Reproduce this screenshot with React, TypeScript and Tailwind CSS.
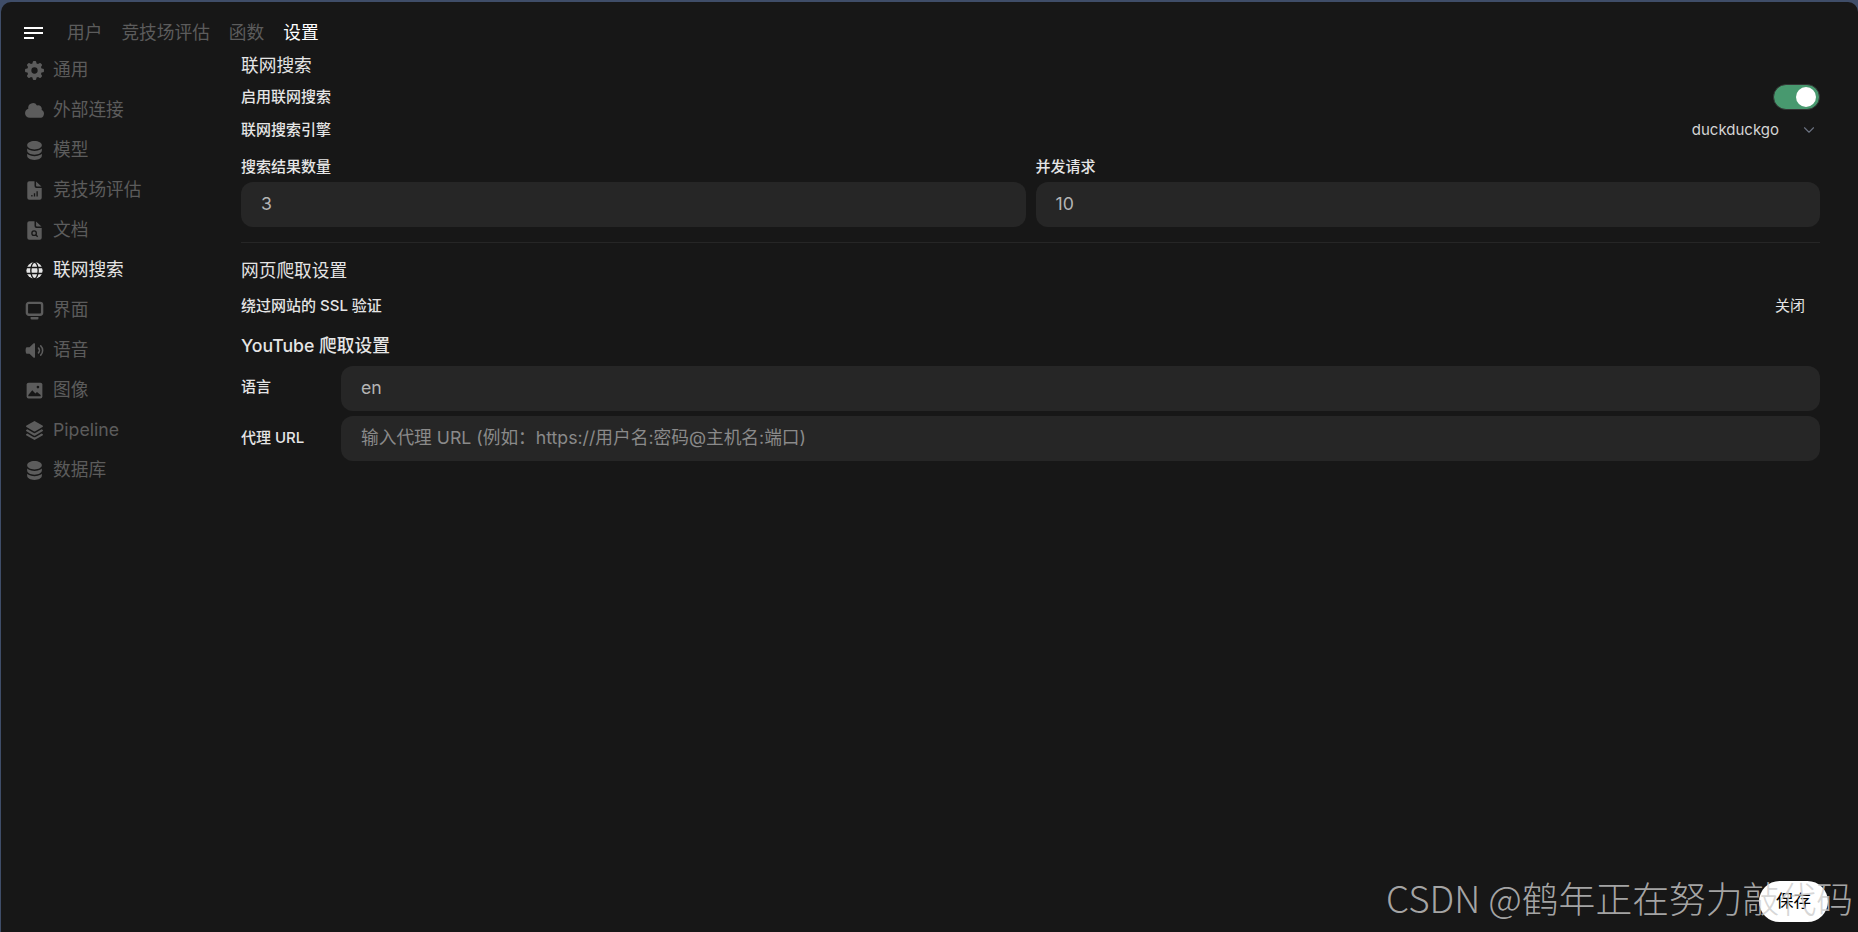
import React from 'react';
import {
  HiMiniCog8Tooth,
  HiMiniCloud,
  HiMiniCircleStack,
  HiMiniSpeakerWave,
  HiMiniSquare3Stack3D,
} from 'react-icons/hi2';
import { ChevronDown } from 'lucide-react';

const fontStack = { fontFamily: '"Inter", "Noto Sans CJK SC", sans-serif' };

type IconProps = { className?: string };

const DocBody = () => (
  <>
    <path d="M2.5 2.5A1.5 1.5 0 0 1 4 1h4v3.5A1.5 1.5 0 0 0 9.5 6h4v7.5A1.5 1.5 0 0 1 12 15H4a1.5 1.5 0 0 1-1.5-1.5Z" fill="currentColor" />
    <path d="M9.2 1.2 13.3 4.9H9.8a.6.6 0 0 1-.6-.6Z" fill="currentColor" />
  </>
);

const DocChartIcon: React.FC<IconProps> = ({ className }) => (
  <svg viewBox="0 0 16 16" className={className}>
    <DocBody />
    <path d="M6 12.5v-1M8 12.5V10M10 12.5V8.5" stroke="#171717" strokeWidth="1" fill="none" />
  </svg>
);

const DocSearchIcon: React.FC<IconProps> = ({ className }) => (
  <svg viewBox="0 0 16 16" className={className}>
    <DocBody />
    <circle cx="7.7" cy="10" r="1.7" stroke="#171717" strokeWidth="1" fill="none" />
    <path d="m9 11.3 1.4 1.4" stroke="#171717" strokeWidth="1" fill="none" />
  </svg>
);

const GlobeIcon: React.FC<IconProps> = ({ className }) => (
  <svg viewBox="0 0 16 16" className={className}>
    <circle cx="8" cy="8" r="6.2" fill="currentColor" />
    <g stroke="#171717" strokeWidth="1" fill="none">
      <ellipse cx="8" cy="8" rx="2.8" ry="6.2" />
      <path d="M1.5 5.7h13M1.5 10.3h13" />
    </g>
  </svg>
);

const MonitorIcon: React.FC<IconProps> = ({ className }) => (
  <svg viewBox="0 0 16 16" className={className}>
    <rect x="2.2" y="2.2" width="11.6" height="9" rx="1.5" stroke="currentColor" strokeWidth="1.8" fill="none" />
    <path d="M5 13h6v1a.8.8 0 0 1-.8.8H5.8A.8.8 0 0 1 5 14Z" fill="currentColor" />
  </svg>
);

const PhotoIcon: React.FC<IconProps> = ({ className }) => (
  <svg viewBox="0 0 16 16" className={className}>
    <rect x="2" y="2" width="12" height="12" rx="1.5" fill="currentColor" />
    <path d="M3.3 11.5 6.3 7.8l2.4 2.4 1.2-1 2.8 2.3v.8H3.3Z" fill="#171717" />
    <circle cx="10.6" cy="5.4" r="1" fill="#171717" />
  </svg>
);

const tabs = [
  { label: '用户', active: false },
  { label: '竞技场评估', active: false },
  { label: '函数', active: false },
  { label: '设置', active: true },
];

const navItems = [
  { label: '通用', icon: HiMiniCog8Tooth },
  { label: '外部连接', icon: HiMiniCloud },
  { label: '模型', icon: HiMiniCircleStack },
  { label: '竞技场评估', icon: DocChartIcon },
  { label: '文档', icon: DocSearchIcon },
  { label: '联网搜索', icon: GlobeIcon, active: true },
  { label: '界面', icon: MonitorIcon },
  { label: '语音', icon: HiMiniSpeakerWave },
  { label: '图像', icon: PhotoIcon },
  { label: 'Pipeline', icon: HiMiniSquare3Stack3D },
  { label: '数据库', icon: HiMiniCircleStack },
];

const Field: React.FC<{ value?: string; placeholder?: string }> = ({ value, placeholder }) => (
  <div className="flex h-[45px] w-full items-center rounded-[12px] bg-[#262626] px-5 text-[17.7px] text-[#b4b4b4]">
    {value ?? <span className="text-[#8a8a8a]">{placeholder}</span>}
  </div>
);

export default function App() {
  return (
    <div className="h-[932px] w-full overflow-hidden bg-[#3f4d68] pl-[1px] pt-[2px]" style={fontStack}>
      <div className="relative flex h-full flex-col rounded-tl-[10px] rounded-tr-[10px] bg-[#171717]">
        {/* Top tabs */}
        <div className="flex h-[48px] shrink-0 items-center pl-[23px] pt-[14px]">
          <svg width="19" height="13" viewBox="0 0 19 13" className="mr-[24px]">
            <rect x="0" y="0" width="19" height="2" fill="#fff" />
            <rect x="0" y="5" width="19" height="2" fill="#fff" />
            <rect x="0" y="10" width="10" height="2" fill="#fff" />
          </svg>
          <div className="flex gap-[19px] text-[17.7px]">
            {tabs.map((tab) => (
              <span key={tab.label} className={tab.active ? 'text-white' : 'text-[#5c5c5c]'}>
                {tab.label}
              </span>
            ))}
          </div>
        </div>

        <div className="flex flex-1">
          {/* Sidebar */}
          <div className="w-[240px] shrink-0 pl-[23px]">
            {navItems.map((item) => {
              const Icon = item.icon;
              return (
                <div
                  key={item.label}
                  className={`flex h-[40px] items-center gap-[8px] text-[17.7px] ${item.active ? 'text-[#e5e5e5]' : 'text-[#5c5c5c]'}`}
                >
                  <Icon className="h-[21px] w-[21px]" />
                  <span>{item.label}</span>
                </div>
              );
            })}
          </div>

          {/* Content */}
          <div className="mt-[1px] w-[1579px] text-[#e5e5e5]">
            <div className="flex h-[30px] items-center text-[17.7px]">联网搜索</div>
            <div className="flex h-[33px] items-center justify-between text-[15px] font-medium">
              <span>启用联网搜索</span>
              <div className="mb-[2px] flex h-[26px] w-[47px] items-center justify-end rounded-full border-[1px] border-[#333] bg-[#48996f] pr-[3px]">
                <div className="h-[20px] w-[20px] rounded-full bg-white" />
              </div>
            </div>
            <div className="flex h-[33px] items-center justify-between text-[15px] font-medium">
              <span>联网搜索引擎</span>
              <div className="flex items-center font-normal text-[#d4d4d4]">
                <span>duckduckgo</span>
                <ChevronDown strokeWidth={1.5} className="mb-[2px] ml-[21px] mr-[2px] h-[18px] w-[18px] text-[#6b7280]" />
              </div>
            </div>
            <div className="mt-[8px] flex gap-[10px]">
              <div className="flex-1">
                <div className="mb-[3px] flex h-[24px] items-center text-[15px] font-medium">搜索结果数量</div>
                <Field value="3" />
              </div>
              <div className="flex-1">
                <div className="mb-[3px] flex h-[24px] items-center text-[15px] font-medium">并发请求</div>
                <Field value="10" />
              </div>
            </div>
            <div className="mt-[15px] h-[1px] bg-[#262626]" />
            <div className="mt-[13px] flex h-[30px] items-center text-[17.7px]">网页爬取设置</div>
            <div className="mt-[4px] flex h-[32px] items-center justify-between text-[15px] font-medium">
              <span>绕过网站的 SSL 验证</span>
              <span className="mr-[15px] font-normal">关闭</span>
            </div>
            <div className="mt-[9px] flex h-[30px] items-center text-[17.7px] font-medium">YouTube 爬取设置</div>
            <div className="mt-[5px] flex h-[45px] items-center">
              <span className="w-[100px] shrink-0 pb-[2px] text-[15px] font-medium">语言</span>
              <Field value="en" />
            </div>
            <div className="mt-[5px] flex h-[45px] items-center">
              <span className="w-[100px] shrink-0 text-[15px] font-medium">代理 URL</span>
              <Field placeholder="输入代理 URL (例如：https://用户名:密码@主机名:端口)" />
            </div>
          </div>
        </div>

        {/* Save button */}
        <div className="absolute bottom-[10px] right-[30px] flex h-[41px] w-[69px] items-center justify-center rounded-full bg-white text-[17.5px] text-black">
          保存
        </div>
        {/* Watermark */}
        <div
          className="absolute bottom-[7px] right-[5px] whitespace-nowrap text-[36.8px] font-light text-[#cccccc]/80"
          style={{ fontFamily: '"Noto Sans CJK SC", sans-serif' }}
        >
          CSDN @鹤年正在努力敲代码
        </div>
      </div>
    </div>
  );
}
